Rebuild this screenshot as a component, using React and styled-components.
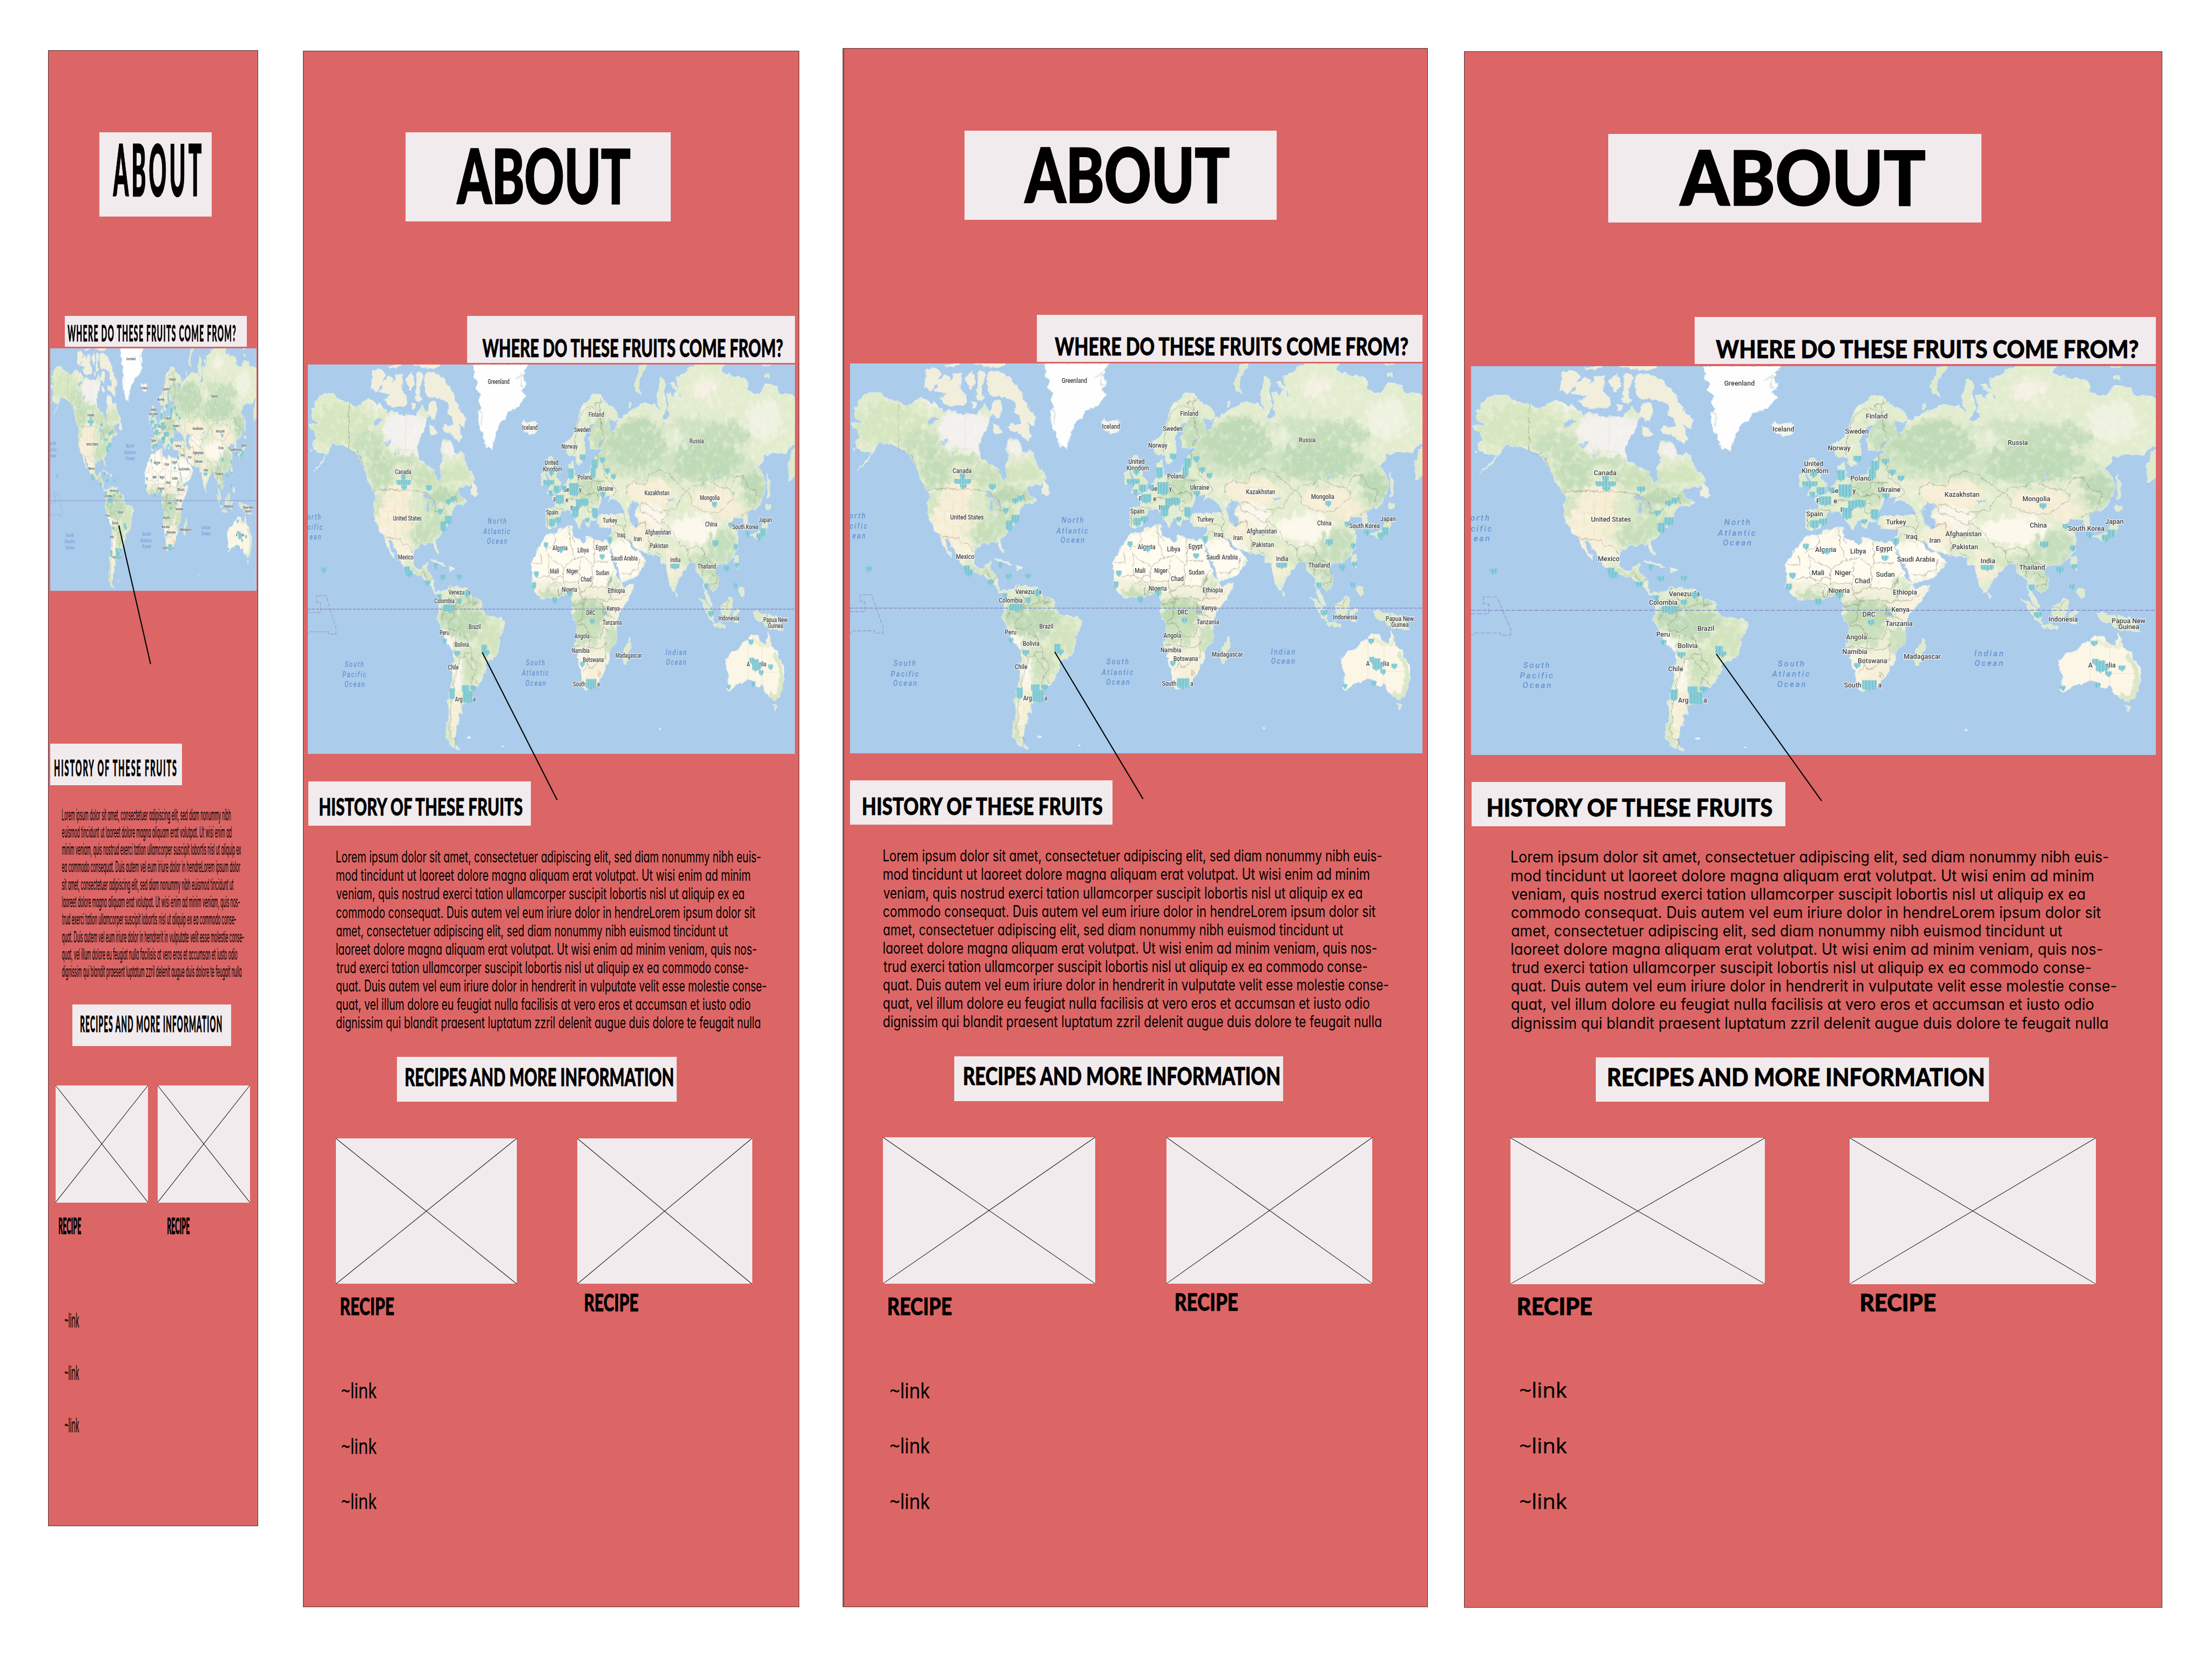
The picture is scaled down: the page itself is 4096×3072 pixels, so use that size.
import React, { useLayoutEffect, useRef } from "react";
import styled, { createGlobalStyle } from "styled-components";

/* Artboard units are converted to screen pixels by this factor. */
const UNIT = 4096 / 5760;
const px = (n) => `${(n * UNIT).toFixed(2)}px`;

const coral = "#dc6665";
const plate = "#f2ebee";
const DISPLAY = `Lato, "Liberation Sans", sans-serif`;
const BODY = `Inter, "Liberation Sans", sans-serif`;
const LINK = `"Open Sans", "Noto Sans", sans-serif`;

const GlobalStyle = createGlobalStyle`
  html, body { margin: 0; padding: 0; background: #fff; }
  body { width: 4096px; height: 3072px; overflow: hidden; color: #000; font-family: ${BODY}; }
  * { box-sizing: border-box; }
`;

/* ---------- stretched text ---------- */

const FitBox = styled.div`
  flex: none;
  width: ${(p) => px(p.$w)};
  height: ${(p) => px(p.$h)};
`;

const FitInk = styled.span`
  display: inline-block;
  vertical-align: top;
  white-space: pre;
  transform-origin: 0 0;
  font-family: ${(p) => p.$family};
  font-weight: ${(p) => p.$weight};
  font-feature-settings: ${(p) => (p.$round ? '"cv11" 1' : "normal")};
  -webkit-text-stroke: ${(p) => p.$bold || 0}px #000;
  font-size: 50px;
  line-height: 1;
  letter-spacing: ${(p) => p.$track || 0}em;
`;

/* Scales a line so its ink fills a w × h box, h being the height of the probe letter. */
function FitText({ children, w, h, family = DISPLAY, weight = 900, track = 0, probe = "H", round, bold = 0 }) {
  const ref = useRef(null);
  useLayoutEffect(() => {
    const el = ref.current;
    const ctx = document.createElement("canvas").getContext("2d");
    const text = String(children);
    ctx.font = `${weight} 100px ${family}`;
    const cap = ctx.measureText(probe);
    const size = ((h * UNIT - bold) * 100) / cap.actualBoundingBoxAscent;
    el.style.fontSize = `${size}px`;
    const k = size / 100;
    const first = ctx.measureText(text[0]);
    const last = ctx.measureText(text[text.length - 1]);
    const lsb = -first.actualBoundingBoxLeft * k - bold / 2;
    const rsb = (last.width - last.actualBoundingBoxRight) * k - bold / 2;
    const ink = el.offsetWidth - track * size - lsb - rsb;
    const sx = (w * UNIT) / ink;
    const base = size / 2 + ((cap.fontBoundingBoxAscent - cap.fontBoundingBoxDescent) / 2) * k + bold / 2;
    el.style.transform = `translate(${-lsb * sx}px, ${h * UNIT - base}px) scaleX(${sx})`;
  });
  return (
    <FitBox $w={w} $h={h}>
      <FitInk ref={ref} $family={family} $weight={weight} $track={track} $round={round} $bold={bold}>
        {children}
      </FitInk>
    </FitBox>
  );
}

/* ---------- page ---------- */

const Page = styled.main`
  display: flex;
  align-items: flex-start;
  width: 4096px;
  height: 3072px;
  overflow: hidden;
  background: #fff;
`;

const Artboard = styled.section`
  position: relative;
  flex: none;
  display: flex;
  flex-direction: column;
  align-items: flex-start;
  width: ${(p) => px(p.$w)};
  height: ${(p) => px(p.$h)};
  margin-top: ${(p) => px(p.$top)};
  margin-left: ${(p) => px(p.$gap)};
  background: ${coral};
  box-shadow: inset 0 0 0 1px #4a3033, ${(p) => (p.$shadow ? "-2px 0 0 0 #7b7375" : "0 0 0 0 #000")};
`;

const Plate = styled.header`
  flex: none;
  width: ${(p) => px(p.$w)};
  height: ${(p) => px(p.$h)};
  margin: ${(p) => px(p.$gap)} 0 0 ${(p) => px(p.$left)};
  padding: ${(p) => px(p.$padY)} 0 0 ${(p) => px(p.$padX)};
  background: ${plate};
`;

const MapFrame = styled.figure`
  flex: none;
  width: ${(p) => px(p.$w)};
  height: ${(p) => px(p.$h)};
  margin: ${(p) => px(p.$gap)} 0 0 ${(p) => px(p.$left)};
  overflow: hidden;
  background: #abcceb;
  svg { display: block; width: 100%; height: 100%; }
`;

const Copy = styled.div`
  display: flex;
  flex-direction: column;
  flex: none;
  gap: ${(p) => px(p.$leading)};
  margin: ${(p) => px(p.$gap)} 0 0 ${(p) => px(p.$left)};
`;

const CardRow = styled.div`
  display: flex;
  align-items: flex-start;
  gap: ${(p) => px(p.$between)};
  margin: ${(p) => px(p.$gap)} 0 0 ${(p) => px(p.$left)};
`;

const Card = styled.article`
  flex: none;
  width: ${(p) => px(p.$w)};
`;

const Thumb = styled.div`
  width: 100%;
  height: ${(p) => px(p.$h)};
  background: ${plate};
  svg { display: block; width: 100%; height: 100%; overflow: visible; }
`;

const CardTitle = styled.div`
  padding: ${(p) => px(p.$gap)} 0 0 ${(p) => px(p.$left)};
`;

const Links = styled.nav`
  display: flex;
  flex-direction: column;
  gap: ${(p) => px(p.$leading)};
  margin: ${(p) => px(p.$gap)} 0 0 ${(p) => px(p.$left)};
`;

const Callout = styled.svg`
  position: absolute;
  left: ${(p) => px(p.$x)};
  top: ${(p) => px(p.$y)};
  width: ${(p) => px(p.$w)};
  height: ${(p) => px(p.$h)};
  overflow: visible;
`;

/* ---------- world map ---------- */

const NORTH_AMERICA =
  "M62,268 L95,264 120,262 82,240 75,205 105,198 95,178 130,155 165,142 215,152 250,168 308,180 355,200 395,180 430,168 470,180 520,195 550,225 580,215 610,222 650,232 690,228 720,232 750,215 768,188 780,215 802,225 790,255 778,290 750,315 735,345 738,375 748,400 775,412 812,430 845,440 855,470 865,490 885,470 878,430 900,400 885,370 890,325 910,322 935,330 955,340 965,372 990,382 1010,365 1028,395 1040,425 1075,445 1092,465 1085,490 1040,500 1000,505 980,520 1000,530 1005,545 1045,560 1010,575 985,570 955,590 950,615 930,635 925,650 900,668 880,690 855,705 845,712 855,735 868,752 862,762 848,745 840,725 810,720 785,728 765,722 740,735 718,742 708,775 712,800 735,822 765,825 772,805 800,798 795,830 822,845 836,858 838,890 850,905 885,912 905,925 890,932 870,918 850,912 825,888 800,872 775,850 750,842 720,840 690,818 645,808 625,780 610,755 590,735 575,708 552,705 565,735 598,782 582,775 560,745 545,725 530,692 500,672 480,640 465,605 468,560 475,535 452,522 448,500 430,480 410,440 385,405 370,385 340,365 300,355 265,340 230,345 215,335 195,350 180,375 150,405 90,445 150,400 165,385 175,375 130,375 100,362 78,340 112,312 92,305 95,285 75,280 Z";
const ARCTIC = [
  "M455,60 L490,50 520,58 540,75 525,85 520,105 495,125 480,138 455,128 450,105 458,85Z",
  "M520,100 L540,90 555,78 575,85 580,105 600,90 600,75 630,68 642,75 635,120 655,150 668,165 672,185 640,195 610,190 580,197 545,180 530,165 560,158 570,150 530,142 495,138 520,128Z",
  "M662,88 L690,70 702,62 715,95 710,115 695,132 682,115Z",
  "M732,68 L770,60 768,95 750,120 748,145 762,170 745,182 722,160 732,130Z",
  "M780,100 L785,75 800,65 850,70 905,88 925,115 950,130 965,160 985,185 1005,210 1040,240 1030,270 1005,262 990,255 1005,290 1010,310 1000,330 965,310 940,295 905,290 888,282 905,265 950,275 965,255 950,235 925,222 935,195 925,175 890,170 850,160 810,160 790,140Z",
  "M815,182 L850,178 860,200 850,235 835,245 800,222Z",
  "M812,262 L835,280 862,295 845,300 820,306Z",
  "M555,44 L590,36 640,32 612,44Z",
  "M690,30 L875,30 870,42 820,46 765,48 745,38Z",
  "M1068,525 L1085,485 1098,500 1115,530 1100,542 1070,535Z",
  "M700,185 L722,180 718,205 700,205Z",
  "M68,360 L80,360 74,368Z",
  "M820,786 L850,786 880,798 912,808 890,808 860,796Z",
  "M935,812 L968,818 955,828 938,824Z",
];
const GREENLAND =
  "M1085,34 L1430,34 1405,55 1412,65 1390,80 1412,100 1408,125 1380,130 1412,155 1395,165 1370,190 1340,205 1300,220 1285,245 1250,255 1230,300 1215,330 1205,362 1170,350 1150,320 1145,300 1128,280 1118,250 1120,215 1138,205 1120,175 1130,150 1105,125 1115,95 1090,85 1098,60Z";
const SOUTH_AMERICA =
  "M880,915 L905,903 925,898 945,880 955,892 985,890 1010,893 1045,895 1062,912 1080,930 1110,932 1130,940 1140,960 1145,980 1165,1000 1190,998 1215,1005 1255,1010 1285,1025 1280,1045 1262,1065 1248,1085 1248,1110 1240,1135 1232,1158 1195,1168 1165,1185 1160,1210 1145,1235 1125,1260 1115,1272 1080,1265 1070,1280 1078,1300 1080,1318 1045,1338 1015,1340 1012,1360 1010,1375 988,1380 1000,1395 995,1415 975,1435 978,1455 965,1470 975,1495 1000,1515 960,1508 935,1490 918,1465 915,1430 930,1405 935,1370 928,1340 935,1300 952,1250 960,1190 962,1140 945,1120 918,1105 900,1075 880,1040 862,1018 860,1000 870,990 870,960 880,940Z";
const AFRICA =
  "M60,685 L80,670 130,660 150,652 165,656 160,680 172,700 205,708 225,722 245,712 248,697 290,708 330,712 372,712 382,735 400,780 415,815 430,845 455,880 470,892 500,885 527,878 520,905 495,940 465,970 445,985 430,1015 425,1050 432,1080 425,1105 400,1120 382,1140 385,1170 360,1190 350,1220 320,1255 290,1280 265,1280 245,1290 230,1272 222,1235 208,1195 192,1150 178,1115 190,1075 190,1040 170,1015 158,985 162,955 158,935 140,920 100,918 75,938 45,930 0,930 -30,935 -50,915 -62,905 -80,885 -78,850 -72,830 -78,800 -60,770 -40,745 -20,720 0,695 30,685Z";
const EURASIA =
  "M5,592 L30,585 62,588 60,562 40,545 70,535 100,520 115,500 130,490 140,445 148,415 168,408 168,435 175,460 200,465 240,458 272,448 278,415 295,395 320,380 345,362 320,358 290,362 270,350 265,320 275,290 298,268 285,255 265,265 245,298 230,318 240,365 225,400 205,420 190,415 182,380 155,385 130,375 128,352 120,335 165,312 185,275 200,240 205,210 230,185 260,172 285,152 335,150 345,168 370,185 405,198 430,215 437,240 415,252 385,245 380,265 400,292 430,268 440,240 460,245 475,225 470,238 510,212 550,200 595,180 620,192 655,185 672,205 692,215 672,180 665,150 685,110 690,88 712,90 715,140 725,200 712,228 690,240 715,248 740,240 735,190 728,150 750,142 768,168 780,130 745,105 760,100 800,130 805,165 812,150 790,100 790,85 840,65 870,45 900,30 1070,30 1050,58 1080,72 1120,80 1170,82 1205,95 1215,135 1250,150 1285,148 1315,108 1360,112 1390,122 1400,150 1430,150 1470,145 1500,160 1500,340 1465,350 1440,375 1385,372 1310,385 1275,430 1300,455 1318,490 1310,530 1280,580 1240,590 1208,605 1215,640 1198,658 1185,640 1180,622 1130,625 1108,645 1140,665 1158,700 1150,740 1128,770 1100,790 1060,800 1032,802 1012,825 1040,860 1035,890 1002,912 985,885 965,865 962,900 985,935 1002,965 980,955 955,920 948,860 925,842 905,830 895,800 865,792 840,822 805,850 785,885 768,910 750,885 735,840 720,800 698,800 690,775 665,762 620,763 590,752 555,745 535,735 515,710 498,700 505,730 540,755 560,752 600,790 580,820 540,850 490,865 455,875 448,845 425,800 410,770 388,730 380,705 392,680 400,658 365,660 330,655 312,640 315,618 360,610 430,612 468,608 478,600 460,580 430,565 425,550 400,552 380,560 395,540 365,535 345,535 330,560 315,585 300,605 300,635 272,632 262,655 245,645 238,618 210,598 190,575 178,562 195,590 225,612 240,625 222,628 215,645 205,660 195,650 175,625 155,598 130,588 95,598 85,625 62,655 30,668 5,655Z";
const EAST_ISLANDS = [
  "M20,395 L45,388 42,415 60,440 70,470 92,488 82,518 40,532 12,528 32,505 22,460 14,425Z",
  "M-25,455 L0,448 6,485 -20,500Z",
  "M580,30 L602,36 585,60 563,90 562,125 578,152 545,138 532,112 550,85 558,55Z",
  "M498,185 L510,178 515,190 503,198Z",
  "M925,930 L960,948 985,970 1005,1000 1010,1028 985,1012 950,968Z",
  "M1005,1035 L1040,1030 1080,1038 1078,1048 1020,1042Z",
  "M1045,965 L1075,958 1100,928 1122,938 1112,985 1085,1008 1055,992Z",
  "M1128,985 L1160,978 1142,998 1152,1028 1130,1022Z",
  "M1245,985 L1262,982 1290,998 1330,995 1380,1005 1405,1028 1428,1062 1385,1052 1330,1048 1300,1022 1262,1012Z",
  "M1132,770 L1150,768 1152,800 1158,820 1140,815Z",
  "M1165,890 L1188,900 1192,918 1175,925 1160,912Z",
  "M1325,572 L1350,578 1338,595 1325,590Z",
  "M1308,640 L1332,640 1325,680 1290,702 1262,705 1225,690 1270,678 1300,670Z",
  "M1328,452 L1342,490 1340,540 1330,555Z",
  "M780,905 L796,912 790,927 782,922Z",
  "M1452,420 L1475,370 1500,350 1500,460 1462,482Z",
  "M1362,1343 L1386,1345 1375,1365Z",
  "M505,1082 L515,1102 500,1150 485,1188 468,1185 465,1140 490,1110Z",
  "M1315,72 L1340,70 1335,88 1318,84Z",
  "M1295,34 L1350,34 1340,40Z",
];
const AUSTRALIA =
  "M1080,1170 L1110,1145 1160,1130 1185,1100 1215,1092 1232,1075 1278,1076 1280,1102 1312,1122 1328,1110 1332,1065 1345,1082 1352,1120 1385,1138 1400,1165 1430,1200 1425,1250 1402,1300 1370,1318 1320,1300 1290,1258 1275,1278 1250,1252 1200,1248 1150,1265 1100,1288 1088,1280 1100,1240 1085,1200Z";

/* Vegetation tints: colour, centre, radii. */
const WEST_PATCHES = [
  ["#d5e6c0", 250, 260, 190, 80], ["#c8dfbc", 420, 330, 90, 60], ["#c3dcb8", 500, 430, 80, 75],
  ["#f3f1ee", 650, 280, 140, 80], ["#f3f1ee", 730, 320, 60, 60], ["#f6f2e4", 480, 175, 70, 22], ["#c8dfbc", 620, 395, 120, 20],
  ["#cbe0ba", 780, 455, 130, 40], ["#bcd8b3", 880, 530, 140, 28], ["#f2f0ec", 930, 350, 50, 40],
  ["#d3e5bf", 980, 450, 90, 40], ["#f7eed6", 620, 505, 85, 35], ["#f7eed6", 560, 640, 95, 100],
  ["#f7edd2", 650, 590, 70, 80], ["#dce9c9", 740, 580, 60, 70], ["#c6deb9", 770, 680, 75, 45],
  ["#c9e0bc", 840, 620, 70, 60], ["#f7f0db", 640, 740, 70, 40], ["#c9dfb9", 480, 570, 14, 50],
  ["#cfe2bc", 740, 830, 110, 18], ["#bed9b5", 1030, 1015, 130, 60], ["#bed9b5", 920, 985, 60, 55],
  ["#c8dfba", 1060, 935, 80, 30], ["#d3e4bf", 1180, 1080, 80, 70], ["#cfe2bc", 1060, 1180, 70, 60],
  ["#fbf8ec", 925, 1100, 34, 40], ["#fcf8ee", 980, 1220, 30, 70], ["#f8f0d6", 975, 1370, 34, 110],
  ["#d2e4bf", 1060, 1300, 40, 50], ["#d0e2c0", 930, 1440, 14, 60],
];
const EAST_PATCHES = [
  ["#cfe3c2", 760, 400, 460, 70], ["#cfe3c2", 900, 300, 300, 60],
  ["#bfdab6", 540, 330, 180, 95], ["#bfdab6", 960, 400, 200, 80], ["#c6deba", 320, 300, 60, 80],
  ["#c5ddbb", 1060, 300, 150, 50], ["#e4edd4", 760, 310, 70, 40], ["#f4f1e2", 960, 120, 90, 45],
  ["#eef2e0", 1300, 240, 110, 80], ["#e4edcf", 1100, 150, 110, 60], ["#bed9b5", 1240, 500, 75, 75],
  ["#e8eed3", 420, 500, 80, 40],
  ["#f8efd6", 620, 520, 140, 55], ["#fbf7ea", 620, 620, 90, 60], ["#f7eed5", 560, 670, 70, 60],
  ["#fdf8ec", 880, 660, 140, 60], ["#f8efd8", 990, 550, 130, 50], ["#f5ecd4", 1100, 590, 80, 45],
  ["#c5debc", 1060, 730, 100, 65], ["#c4ddba", 930, 790, 70, 40], ["#c9e0bd", 1000, 860, 40, 50],
  ["#f7efd7", 750, 800, 50, 60], ["#d8e7c4", 830, 770, 60, 30], ["#fffbf0", 480, 780, 110, 80],
  ["#f7efd8", 370, 635, 60, 22], ["#c6deb9", 250, 510, 90, 50], ["#d4e5c0", 60, 610, 50, 30],
  ["#fffbef", 120, 770, 210, 105], ["#fffbef", 330, 790, 120, 90], ["#fffbef", -30, 800, 70, 60],
  ["#c0dab4", 250, 985, 110, 60], ["#c4ddb8", 60, 915, 110, 20], ["#cce1be", 240, 1060, 90, 50],
  ["#cce1be", 400, 1080, 50, 60], ["#fbf5e4", 220, 1180, 50, 60], ["#f8efd8", 290, 1210, 50, 50],
  ["#f9f2df", 460, 930, 70, 50], ["#cfe3bf", 400, 880, 40, 30],
];

const WEST_BORDERS =
  "M308,180 V357 L340,375 365,370 408,432 M455,520 L468,530 472,517 H728 L755,528 800,530 830,550 850,575 848,600 880,595 915,580 930,560 975,540 985,570 M530,692 L580,705 625,705 650,728 675,722 708,756 M765,840 L780,828 785,850 800,862 832,858 M945,882 L935,910 970,925 985,945 965,975 M965,975 L968,1000 930,1030 940,1055 980,1058 1000,1045 1015,1035 M880,1010 L905,992 965,990 M965,962 L1005,968 1040,948 1080,955 1125,950 M1060,930 V950 M1085,932 V952 M1105,935 V955 M980,1058 L975,1085 962,1120 M1000,1070 L1050,1092 1055,1110 1075,1125 1070,1140 1035,1140 1030,1160 1005,1162 975,1155 962,1130 M1070,1140 L1080,1172 1108,1180 1112,1205 1080,1235 1118,1265 M1080,1235 L1072,1270 M1030,1160 L1070,1195 1090,1210 M1005,1162 L990,1190 980,1215 965,1250 960,1300 948,1340 945,1400 935,1440 950,1470 975,1475 V1510";
const WEST_LIGHT = "M470,560 H545 M530,600 H600 V700 M600,560 V600 M650,518 V610 M690,540 V700 M555,600 V650 M600,640 H690 M650,560 H720 M665,363 V228 M595,363 H720";
const EAST_BORDERS =
  "M180,375 L182,300 205,240 225,215 255,195 270,205 M330,165 L328,240 338,280 352,320 318,358 M270,195 L300,200 308,175 330,180 348,175 M318,372 L318,395 350,420 352,450 375,480 395,485 425,515 420,530 398,540 M195,470 L205,500 250,520 280,500 283,470 M283,480 L350,485 M160,520 L190,540 215,525 250,535 275,530 M110,575 L140,555 170,548 215,560 245,555 290,570 M245,555 L255,600 300,590 M255,530 L310,530 325,560 M62,588 L110,592 M10,600 L12,655 M485,530 L495,495 530,485 575,495 610,490 620,460 690,435 745,455 775,480 830,515 845,522 810,545 780,590 735,595 695,600 650,592 605,570 570,565 V600 L640,620 670,645 700,640 740,600 M845,522 L880,500 940,500 955,480 1000,490 1060,510 1110,510 1130,540 1080,580 1030,605 960,600 880,575 870,540Z M1110,510 L1140,465 1185,462 1215,510 1265,525 1240,590 1175,615 M700,640 L735,660 770,680 780,710 850,745 900,735 945,740 950,780 925,800 950,850 M945,760 L975,790 1010,800 1035,870 985,885 M980,830 L1020,850 M850,745 L860,790 890,790 M460,600 L485,640 470,665 485,700 520,735 M545,650 L600,640 615,690 625,735 620,763 M615,690 L680,690 700,650 M625,735 L680,760 700,775 M390,655 L465,650 470,680 M395,700 L420,680 480,725 M455,840 L520,835 560,815 565,780 M60,685 L62,720 0,755 M145,655 L150,720 178,785 M178,785 L230,770 285,810 M160,690 L178,720 M15,765 L110,818 175,780 M293,705 V808 M293,792 H378 M20,765 L22,850 -60,850 M-25,760 L-20,800 -72,800 M22,850 L50,860 105,850 110,818 M105,850 L110,870 200,870 210,790 M200,870 L210,910 270,890 285,870 280,810 M285,870 L275,890 360,890 395,855 410,830 M30,880 L70,865 100,885 M80,885 V925 M100,885 L95,920 M205,910 L225,940 310,930 360,945 400,935 M160,960 L230,955 235,930 M230,955 L225,1010 190,1025 M345,950 L350,1040 375,1060 M350,985 L420,1015 M190,1030 L240,1035 270,1080 330,1085 350,1045 M270,1080 L265,1120 180,1118 M265,1120 L330,1130 370,1100 M255,1125 L250,1190 230,1215 M250,1190 L290,1200 335,1165 M395,855 L375,890 400,935 445,940 490,910 M320,1215 L335,1222 325,1235 312,1228Z M360,1105 L365,1160 330,1170 M1048,965 L1085,965 1105,935 M1330,995 V1050";
const EAST_LIGHT = "M1215,1100 V1250 M1297,1120 V1290 M1297,1218 H1425 M590,510 H700 M740,540 L800,560";

const west = (x, y) => [(x - 53) * 0.5867, (y - 34) * 0.676];
const east = (x, y) => [869 + x * 0.6122, (y - 34) * 0.676];

const LABELS = [
  ...[["Greenland", 1244, 100], ["Iceland", 1439, 277], ["Canada", 648, 446], ["United States", 674, 625], ["Mexico", 664, 776], ["Venezu", 980, 911], ["la", 1056, 911], ["Colombia", 906, 944], ["Brazil", 1095, 1044], ["Peru", 906, 1067], ["Bolivia", 1014, 1112], ["Chile", 961, 1200], ["Arg", 995, 1321], ["a", 1092, 1321]].map(([t, x, y]) => [t, ...west(x, y)]),
  ...[["Finland", 306, 226], ["Sweden", 222, 285], ["Norway", 146, 349], ["Russia", 906, 329], ["United", 38, 411], ["Kingdom", 44, 437], ["Poland", 238, 467], ["Ukraine", 359, 511], ["Ge", 126, 515], ["y", 210, 515], ["F", 57, 554], ["e", 130, 554], ["Italy", 178, 587], ["Spain", 42, 603], ["Turkey", 388, 634], ["Kazakhstan", 669, 528], ["Mongolia", 985, 546], ["China", 993, 648], ["South Korea", 1197, 659], ["Japan", 1317, 632], ["Afghanistan", 675, 680], ["Pakistan", 682, 731], ["Iraq", 455, 691], ["Iran", 554, 705], ["Algeria", 89, 740], ["Libya", 227, 748], ["Egypt", 338, 737], ["Saudi Arabia", 473, 779], ["India", 779, 785], ["Thailand", 967, 810], ["Mali", 56, 830], ["Niger", 162, 830], ["Sudan", 343, 836], ["Chad", 245, 861], ["Nigeria", 146, 899], ["Ethiopia", 426, 905], ["Kenya", 407, 973], ["DRC", 273, 990], ["Tanzania", 401, 1027], ["Indonesia", 1099, 1010], ["Papua New", 1377, 1016], ["Guinea", 1378, 1039], ["Angola", 220, 1079], ["Namibia", 213, 1135], ["Botswana", 288, 1170], ["Madagascar", 500, 1153], ["South", 204, 1264], ["a", 319, 1264], ["A", 1215, 1187], ["alia", 1300, 1187]].map(([t, x, y]) => [t, ...east(x, y)]),
];
const OCEANS = [
  ...[["North", 1234, 636], ["Atlantic", 1232, 677], ["Ocean", 1234, 714], ["orth", 92, 619], ["cific", 98, 660], ["ean", 100, 697], ["South", 343, 1187], ["Pacific", 343, 1227], ["Ocean", 345, 1264], ["South", 1473, 1181], ["Atlantic", 1472, 1221], ["Ocean", 1475, 1259]].map(([t, x, y]) => [t, ...west(x, y)]),
  ...[["Indian", 783, 1142], ["Ocean", 783, 1179]].map(([t, x, y]) => [t, ...east(x, y)]),
];
/* Marker clusters: left, top, width, height. */
const WEST_PINS = [[636, 457, 28, 24], [606, 478, 90, 22], [636, 498, 36, 18], [790, 498, 36, 22], [914, 552, 34, 20], [944, 541, 30, 22], [864, 590, 30, 20], [908, 616, 42, 32], [880, 638, 36, 40], [656, 811, 34, 22], [664, 826, 40, 26], [136, 815, 32, 20], [840, 800, 22, 20], [878, 843, 32, 20], [984, 843, 30, 18], [782, 865, 36, 20], [864, 917, 24, 20], [984, 934, 28, 22], [1030, 905, 32, 24], [900, 958, 66, 30], [894, 1089, 26, 18], [968, 1136, 36, 20], [1138, 1112, 32, 36], [1154, 1134, 32, 20], [936, 1280, 34, 44], [1014, 1268, 44, 30], [1020, 1290, 62, 48], [1068, 1270, 34, 20]];
const EAST_PINS = [[206, 380, 36, 24], [278, 398, 38, 40], [272, 430, 30, 42], [328, 391, 30, 22], [358, 433, 28, 22], [394, 456, 30, 20], [136, 434, 36, 42], [22, 440, 30, 22], [-12, 478, 66, 22], [50, 500, 36, 30], [20, 518, 24, 20], [100, 500, 26, 22], [144, 490, 56, 50], [62, 536, 50, 36], [184, 552, 38, 34], [216, 550, 44, 30], [160, 580, 40, 44], [280, 586, 34, 40], [330, 524, 30, 20], [22, 628, 38, 32], [60, 622, 34, 24], [240, 624, 26, 18], [374, 697, 26, 28], [-8, 718, 26, 22], [80, 738, 30, 20], [326, 764, 30, 20], [-66, 830, 28, 22], [-80, 872, 26, 26], [44, 930, 28, 24], [134, 906, 28, 22], [266, 1012, 30, 20], [208, 1178, 28, 20], [244, 1244, 62, 40], [748, 800, 56, 22], [998, 562, 30, 22], [1096, 642, 26, 20], [1000, 710, 36, 24], [1128, 726, 24, 20], [1070, 808, 30, 22], [1132, 797, 26, 20], [1126, 876, 22, 20], [950, 876, 26, 22], [1198, 674, 26, 22], [1264, 684, 34, 26], [1286, 664, 36, 32], [974, 982, 34, 22], [1216, 1092, 30, 20], [1222, 1162, 28, 24], [1238, 1168, 40, 46], [1268, 1186, 26, 22], [1278, 1210, 28, 20], [1334, 1188, 30, 20], [1232, 1255, 26, 18], [1086, 1266, 24, 18]];

/* A cluster is a block with clipped lower corners and a short stem. */
const pinPath = ([x, y, w, h]) =>
  `M${x},${y}h${w}v${h - 7}h-4v4h${-(w / 2 - 8)}v5h-8v-5h${-(w / 2 - 8)}v-4h-4z`;

function WorldMap({ id }) {
  const rough = `${id}-rough`;
  const soft = `${id}-soft`;
  const pins = `${id}-pins`;
  const grain = `${id}-grain`;
  const landWest = `${id}-lw`;
  const landEast = `${id}-le`;
  const W = "scale(.5867 .676) translate(-53 -34)";
  const E = "translate(869 0) scale(.6122 .676) translate(0 -34)";
  return (
    <svg viewBox="0 0 1783 1013" preserveAspectRatio="none">
      <defs>
        <filter id={rough} x="0" y="0" width="1783" height="1013" filterUnits="userSpaceOnUse">
          <feTurbulence type="fractalNoise" baseFrequency="0.07" numOctaves="4" seed="4" result="n" />
          <feDisplacementMap in="SourceGraphic" in2="n" scale="14" xChannelSelector="R" yChannelSelector="G" />
          <feGaussianBlur stdDeviation="0.6" />
        </filter>
        <filter id={soft} x="-30%" y="-30%" width="160%" height="160%">
          <feGaussianBlur stdDeviation="10" result="b" />
          <feTurbulence type="fractalNoise" baseFrequency="0.03" numOctaves="5" seed="9" result="n" />
          <feDisplacementMap in="b" in2="n" scale="80" xChannelSelector="R" yChannelSelector="G" />
        </filter>
        <filter id={grain} x="0" y="0" width="1783" height="1013" filterUnits="userSpaceOnUse">
          <feTurbulence type="fractalNoise" baseFrequency="0.05" numOctaves="4" seed="21" />
          <feColorMatrix values="0 0 0 0 .98  0 0 0 0 .97  0 0 0 0 .9  2.6 0 0 0 -1.25" />
          <feComposite in2="SourceGraphic" operator="in" />
        </filter>
        <pattern id={pins} width="14" height="60" patternUnits="userSpaceOnUse">
          <rect width="14" height="60" fill="#79c8d4" />
          <rect width="2.5" height="60" fill="#a4d8e6" />
          <rect x="7" width="2" height="60" fill="#66b8c8" />
        </pattern>
        <clipPath id={landWest}>
          <path d={NORTH_AMERICA} />
          <path d={SOUTH_AMERICA} />
        </clipPath>
        <clipPath id={landEast}>
          <path d={AFRICA} />
          <path d={EURASIA} />
        </clipPath>
      </defs>
      <rect width="1783" height="1013" fill="#abcceb" />
      <g filter={`url(#${rough})`}>
        <g transform={W}>
          <g fill="#e0ebcc" stroke="#e6f0f2" strokeWidth="4" strokeLinejoin="round" paintOrder="stroke">
            <path d={NORTH_AMERICA} />
            <path d={SOUTH_AMERICA} />
            <path d={ARCTIC.join("")} fill="#f1efdc" />
            <path d={GREENLAND} fill="#fefefe" />
            <path d="M1390,255 L1405,248 1418,260 1440,255 1470,250 1490,275 1470,292 1432,305 1402,292Z" fill="#f3f4ec" />
          </g>
          <g clipPath={`url(#${landWest})`}>
            <g filter={`url(#${soft})`}>
              {WEST_PATCHES.map(([c, x, y, rx, ry], i) => (
                <ellipse key={i} cx={x + 8} cy={y + 8} rx={rx} ry={ry} fill={c} />
              ))}
            </g>
          </g>
          <g fill="#abcceb">
            <path d="M465,250 L505,238 520,248 495,268 470,272Z M530,335 L575,322 560,340 540,348Z M590,378 L620,375 600,388Z M765,540 L800,530 820,552 790,548Z M800,560 L812,560 810,600 800,600Z M822,560 L842,565 850,585 828,580Z M848,602 L885,590 870,602Z M700,460 L712,485 700,480Z" />
          </g>
          <path d="M1355,90 L1390,70 1380,110 1400,120 M1122,210 L1140,215 1135,270" stroke="#dfe9e6" strokeWidth="8" fill="none" />
        </g>
        <g transform={E}>
          <g fill="#e2ecce" stroke="#e6f0f2" strokeWidth="4" strokeLinejoin="round" paintOrder="stroke">
            <path d={AFRICA} fill="#f3f1dc" />
            <path d={EURASIA} />
            <path d={EAST_ISLANDS.join("")} fill="#dfeaca" />
            <path d={AUSTRALIA} fill="#fbf6e6" />
          </g>
          <g clipPath={`url(#${landEast})`}>
            <g filter={`url(#${soft})`}>
              {EAST_PATCHES.map(([c, x, y, rx, ry], i) => (
                <ellipse key={i} cx={x + 8} cy={y + 8} rx={rx} ry={ry} fill={c} />
              ))}
            </g>
          </g>
          <path d="M1370,1150 Q1425,1200 1410,1270 T1340,1300" stroke="#dbe8c8" strokeWidth="22" fill="none" />
          <path d="M1240,1085 L1280,1110 1340,1115 1345,1080" stroke="#eeecd0" strokeWidth="14" fill="none" />
          <g fill="#abcceb">
            <path d="M495,590 L520,560 560,570 560,580 535,590 540,615 560,640 550,660 520,658 510,630Z M725,555 L775,545 765,556 735,565Z M1000,485 L1025,455 1045,430 1040,450 1010,485Z M350,985 L370,985 365,1000 352,998Z M315,335 L345,320 340,345Z M395,275 L402,300 390,290Z" />
          </g>
        </g>
        <g fill="none" stroke="#85827a" strokeWidth="1.9" strokeLinejoin="round" opacity=".9">
          <path d={WEST_BORDERS} transform={W} />
          <path d={EAST_BORDERS} transform={E} />
        </g>
      </g>
      <g filter={`url(#${grain})`} opacity=".45">
        <g transform={W}>
          <path d={NORTH_AMERICA} />
          <path d={SOUTH_AMERICA} />
        </g>
        <g transform={E}>
          <path d={EURASIA} />
        </g>
      </g>
      <g fill="none" stroke="#dcd5c0" strokeWidth="1.2">
        <path d={WEST_LIGHT} transform={W} />
        <path d={EAST_LIGHT} transform={E} />
      </g>
      <g fill="none" stroke="#8d93cb" strokeWidth="2.4">
        <path d="M0,636 H1783" strokeDasharray="11 4" />
        <path d="M0,645 H46 V619 H32 V601 H67 L103,685 V701 H77 V695 H10 L0,701" strokeWidth="1.6" strokeDasharray="12 4" />
      </g>
      <g fontFamily={`Roboto, "Liberation Sans", sans-serif`} fontWeight="500" fontSize="17.4" fill="#3f3f3f" stroke="#fff" strokeOpacity=".75" strokeWidth="3.5" paintOrder="stroke" textAnchor="middle">
        {LABELS.map(([t, x, y], i) => (
          <text key={i} x={x} y={y + 6}>{t}</text>
        ))}
      </g>
      <g fontFamily={`Roboto, "Liberation Sans", sans-serif`} fontStyle="italic" fontSize="21" letterSpacing="4" fill="#5f8fcd" stroke="#5f8fcd" strokeWidth=".3" textAnchor="middle">
        {OCEANS.map(([t, x, y], i) => (
          <text key={i} x={x + 2} y={y + 7}>{t}</text>
        ))}
      </g>
      <g fill={`url(#${pins})`} opacity=".93">
        <g transform={W}>
          {WEST_PINS.map((pin, i) => (
            <path key={i} d={pinPath(pin)} />
          ))}
        </g>
        <g transform={E}>
          {EAST_PINS.map((pin, i) => (
            <path key={i} d={pinPath(pin)} />
          ))}
        </g>
      </g>
      <g fill="#e8f3f6">
        <ellipse cx="590" cy="970" rx="7" ry="3" />
        <ellipse cx="714" cy="993" rx="4" ry="2" />
        <ellipse cx="1289" cy="948" rx="4" ry="2.5" />
      </g>
    </svg>
  );
}

/* ---------- content ---------- */

const WIDE_COPY = {
  lines: [
    "Lorem ipsum dolor sit amet, consectetuer adipiscing elit, sed diam nonummy nibh euis-",
    "mod tincidunt ut laoreet dolore magna aliquam erat volutpat. Ut wisi enim ad minim",
    "veniam, quis nostrud exerci tation ullamcorper suscipit lobortis nisl ut aliquip ex ea",
    "commodo consequat. Duis autem vel eum iriure dolor in hendreLorem ipsum dolor sit",
    "amet, consectetuer adipiscing elit, sed diam nonummy nibh euismod tincidunt ut",
    "laoreet dolore magna aliquam erat volutpat. Ut wisi enim ad minim veniam, quis nos-",
    "trud exerci tation ullamcorper suscipit lobortis nisl ut aliquip ex ea commodo conse-",
    "quat. Duis autem vel eum iriure dolor in hendrerit in vulputate velit esse molestie conse-",
    "quat, vel illum dolore eu feugiat nulla facilisis at vero eros et accumsan et iusto odio",
    "dignissim qui blandit praesent luptatum zzril delenit augue duis dolore te feugait nulla",
  ],
  measure: [1282, 1250, 1231, 1266, 1183, 1269, 1244, 1299, 1251, 1281],
};
const NARROW_COPY = {
  lines: [
    "Lorem ipsum dolor sit amet, consectetuer adipiscing elit, sed diam nonummy nibh",
    "euismod tincidunt ut laoreet dolore magna aliquam erat volutpat. Ut wisi enim ad",
    "minim veniam, quis nostrud exerci tation ullamcorper suscipit lobortis nisl ut aliquip ex",
    "ea commodo consequat. Duis autem vel eum iriure dolor in hendreLorem ipsum dolor",
    "sit amet, consectetuer adipiscing elit, sed diam nonummy nibh euismod tincidunt ut",
    "laoreet dolore magna aliquam erat volutpat. Ut wisi enim ad minim veniam, quis nos-",
    "trud exerci tation ullamcorper suscipit lobortis nisl ut aliquip ex ea commodo conse-",
    "quat. Duis autem vel eum iriure dolor in hendrerit in vulputate velit esse molestie conse-",
    "quat, vel illum dolore eu feugiat nulla facilisis at vero eros et accumsan et iusto odio",
    "dignissim qui blandit praesent luptatum zzril delenit augue duis dolore te feugait nulla",
  ],
  measure: [1111, 1115, 1179, 1174, 1129, 1170, 1146, 1197, 1153, 1181],
};

/* Boxes are [left, top, right, bottom] on the canvas, in artboard units. */
const BOARDS = [
  {
    id: "phone", box: [125.5, 130.5, 672.6, 3974], track: 0.13, wideTrack: 0.09, copy: NARROW_COPY,
    about: [259, 345, 551.6, 564], aboutInk: [294.5, 374, 525.5, 513],
    where: [168.8, 822, 642, 903.4], whereInk: [176, 847, 614, 891],
    map: [131, 906.7, 667.4, 1538.7], line: [309, 1368.5, 391.8, 1729.6],
    history: [131, 1936.4, 474.5, 2044.7], historyInk: [142.3, 1979, 460, 2022.5],
    copyLeft: 162, copyBase: 2136.6, copyWidth: 473, pitch: 45.4, copyCap: 29,
    recipes: [187.8, 2616.5, 601.8, 2724.8], recipesInk: [209.5, 2645, 577, 2688.5],
    cards: [[144.3, 2827.7, 384.7, 3132], [411, 2827.7, 650.8, 3132]],
    names: [[153, 3172, 210.7, 3215.5], [435.7, 3172, 493.4, 3215.5]],
    link: [168.8, 3418, 205.6, 3458], linkPitch: 136.5,
  },
  {
    id: "tablet", box: [789.5, 131.5, 2081, 4185], copy: WIDE_COPY,
    about: [1055.8, 344.8, 1747, 576.2], aboutInk: [1188.5, 387.5, 1642, 533.5],
    where: [1216, 822, 2069.7, 944.6], whereInk: [1255.3, 884, 2037.6, 931],
    map: [801.7, 949.4, 2069.7, 1963.6], line: [1255.3, 1699.4, 1450.4, 2084],
    history: [802.5, 2034.8, 1382.7, 2150], historyInk: [832, 2079, 1359.3, 2125.5],
    copyLeft: 876.4, copyBase: 2246.6, copyWidth: 1119, pitch: 48, copyCap: 30,
    recipes: [1033, 2752.8, 1761.7, 2869], recipesInk: [1055.7, 2783, 1752, 2830],
    cards: [[874.5, 2964, 1345.4, 3343], [1504, 2964, 1958.6, 3343]],
    names: [[888, 3380.5, 1026.3, 3426.5], [1523, 3369, 1662, 3415.5]],
    link: [890, 3599, 980, 3641], linkPitch: 144.3,
  },
  {
    id: "laptop", box: [2197, 125.5, 3718, 4184.6], shadow: true, copy: WIDE_COPY,
    about: [2512, 341, 3325, 573], aboutInk: [2666.5, 384.4, 3201.8, 531],
    where: [2700, 819.4, 3704, 942], whereInk: [2746, 880.6, 3666, 928],
    map: [2213, 947, 3704, 1962], line: [2746, 1698, 2976, 2081],
    history: [2214, 2032, 2897, 2148], historyInk: [2246.7, 2077, 2869.5, 2123.5],
    copyLeft: 2300.4, copyBase: 2244, copyWidth: 1314, pitch: 48, copyCap: 30,
    recipes: [2485.4, 2751, 3342, 2867], recipesInk: [2510, 2781, 3331, 2828],
    cards: [[2299.4, 2962, 2851.6, 3343], [3037.6, 2962, 3574, 3343]],
    names: [[2313, 3379, 2477.5, 3425.5], [3061.5, 3368.6, 3223.7, 3415]],
    link: [2319, 3598.5, 2421.8, 3641], linkPitch: 144.3,
  },
  {
    id: "desktop", box: [3812.7, 133.9, 5630.3, 4186.3], copy: WIDE_COPY,
    about: [4188.4, 348.5, 5160, 579.3], aboutInk: [4372.5, 391.6, 5013.5, 538],
    where: [4412.5, 825, 5613.3, 948.4], whereInk: [4468, 886.4, 5568.5, 934],
    map: [3831, 953, 5614, 1965.6], line: [4468.9, 1702.7, 4743.3, 2085.5],
    history: [3832, 2037, 4648.8, 2151.8], historyInk: [3874.5, 2080, 4615, 2127.5],
    copyLeft: 3935.5, copyBase: 2247, copyWidth: 1574, pitch: 48, copyCap: 30,
    recipes: [4155.6, 2753.9, 5179.5, 2869.3], recipesInk: [4188.4, 2783, 5166, 2830.4],
    cards: [[3932.7, 2963.7, 4595.5, 3344.3], [4817, 2963.7, 5458, 3344.3]],
    names: [[3953.3, 3381.4, 4146, 3427.5], [4846, 3370, 5040, 3416.5]],
    link: [3958, 3598, 4080.5, 3640.5], linkPitch: 144.3,
  },
];

function Title({ text, box, ink, above, origin, track }) {
  return (
    <Plate
      $gap={box[1] - above}
      $left={box[0] - origin}
      $w={box[2] - box[0]}
      $h={box[3] - box[1]}
      $padX={ink[0] - box[0]}
      $padY={ink[1] - box[1]}
    >
      <FitText w={ink[2] - ink[0]} h={ink[3] - ink[1]} track={track} bold={text === "ABOUT" ? 2.4 : 0.8}>
        {text}
      </FitText>
    </Plate>
  );
}

function Placeholder({ height }) {
  return (
    <Thumb $h={height}>
      <svg viewBox="0 0 100 100" preserveAspectRatio="none">
        <path d="M0,0 L100,100 M100,0 L0,100" stroke="#222" strokeWidth="1.1" vectorEffect="non-scaling-stroke" />
      </svg>
    </Thumb>
  );
}

function Board({ b, prev }) {
  const [x0, y0, x1, y1] = b.box;
  const widest = Math.max(...b.copy.measure);
  const copyTop = b.copyBase - b.copyCap;
  const copyBottom = b.copyBase + 9 * b.pitch;
  const [c1, c2] = b.cards;
  const [n1, n2] = b.names;
  const namesBottom = Math.max(n1[3], n2[3]);
  return (
    <Artboard $w={x1 - x0} $h={y1 - y0} $top={y0} $gap={x0 - prev} $shadow={b.shadow}>
      <Title text="ABOUT" box={b.about} ink={b.aboutInk} above={y0} origin={x0} track={b.track} />
      <Title text="WHERE DO THESE FRUITS COME FROM?" box={b.where} ink={b.whereInk} above={b.about[3]} origin={x0} track={b.wideTrack} />
      <MapFrame $gap={b.map[1] - b.where[3]} $left={b.map[0] - x0} $w={b.map[2] - b.map[0]} $h={b.map[3] - b.map[1]}>
        <WorldMap id={b.id} />
      </MapFrame>
      <Title text="HISTORY OF THESE FRUITS" box={b.history} ink={b.historyInk} above={b.map[3]} origin={x0} track={b.track} />
      <Copy $gap={copyTop - b.history[3]} $left={b.copyLeft - x0} $leading={b.pitch - b.copyCap}>
        {b.copy.lines.map((line, i) => (
          <FitText key={i} w={(b.copy.measure[i] / widest) * b.copyWidth} h={b.copyCap} family={BODY} weight={400} round>
            {line}
          </FitText>
        ))}
      </Copy>
      <Title text="RECIPES AND MORE INFORMATION" box={b.recipes} ink={b.recipesInk} above={copyBottom} origin={x0} track={b.wideTrack} />
      <CardRow $gap={c1[1] - b.recipes[3]} $left={c1[0] - x0} $between={c2[0] - c1[2]}>
        {[[c1, n1], [c2, n2]].map(([c, n], i) => (
          <Card key={i} $w={c[2] - c[0]}>
            <Placeholder height={c[3] - c[1]} />
            <CardTitle $gap={n[1] - c[3]} $left={n[0] - c[0]}>
              <FitText w={n[2] - n[0]} h={n[3] - n[1]} bold={0.8}>RECIPE</FitText>
            </CardTitle>
          </Card>
        ))}
      </CardRow>
      <Links $gap={b.link[1] - namesBottom} $left={b.link[0] - x0} $leading={b.linkPitch - (b.link[3] - b.link[1])}>
        {[0, 1, 2].map((i) => (
          <FitText key={i} w={b.link[2] - b.link[0]} h={b.link[3] - b.link[1]} family={LINK} weight={400} probe="l" bold={0.5}>
            ~link
          </FitText>
        ))}
      </Links>
      <Callout
        $x={b.line[0] - x0}
        $y={b.line[1] - y0}
        $w={b.line[2] - b.line[0]}
        $h={b.line[3] - b.line[1]}
        viewBox="0 0 100 100"
        preserveAspectRatio="none"
      >
        <path d="M0,0 L100,100" stroke="#000" strokeWidth="2.1" vectorEffect="non-scaling-stroke" />
      </Callout>
    </Artboard>
  );
}

export default function App() {
  return (
    <>
      <GlobalStyle />
      <Page>
        {BOARDS.map((b, i) => (
          <Board key={b.id} b={b} prev={i ? BOARDS[i - 1].box[2] : 0} />
        ))}
      </Page>
    </>
  );
}
